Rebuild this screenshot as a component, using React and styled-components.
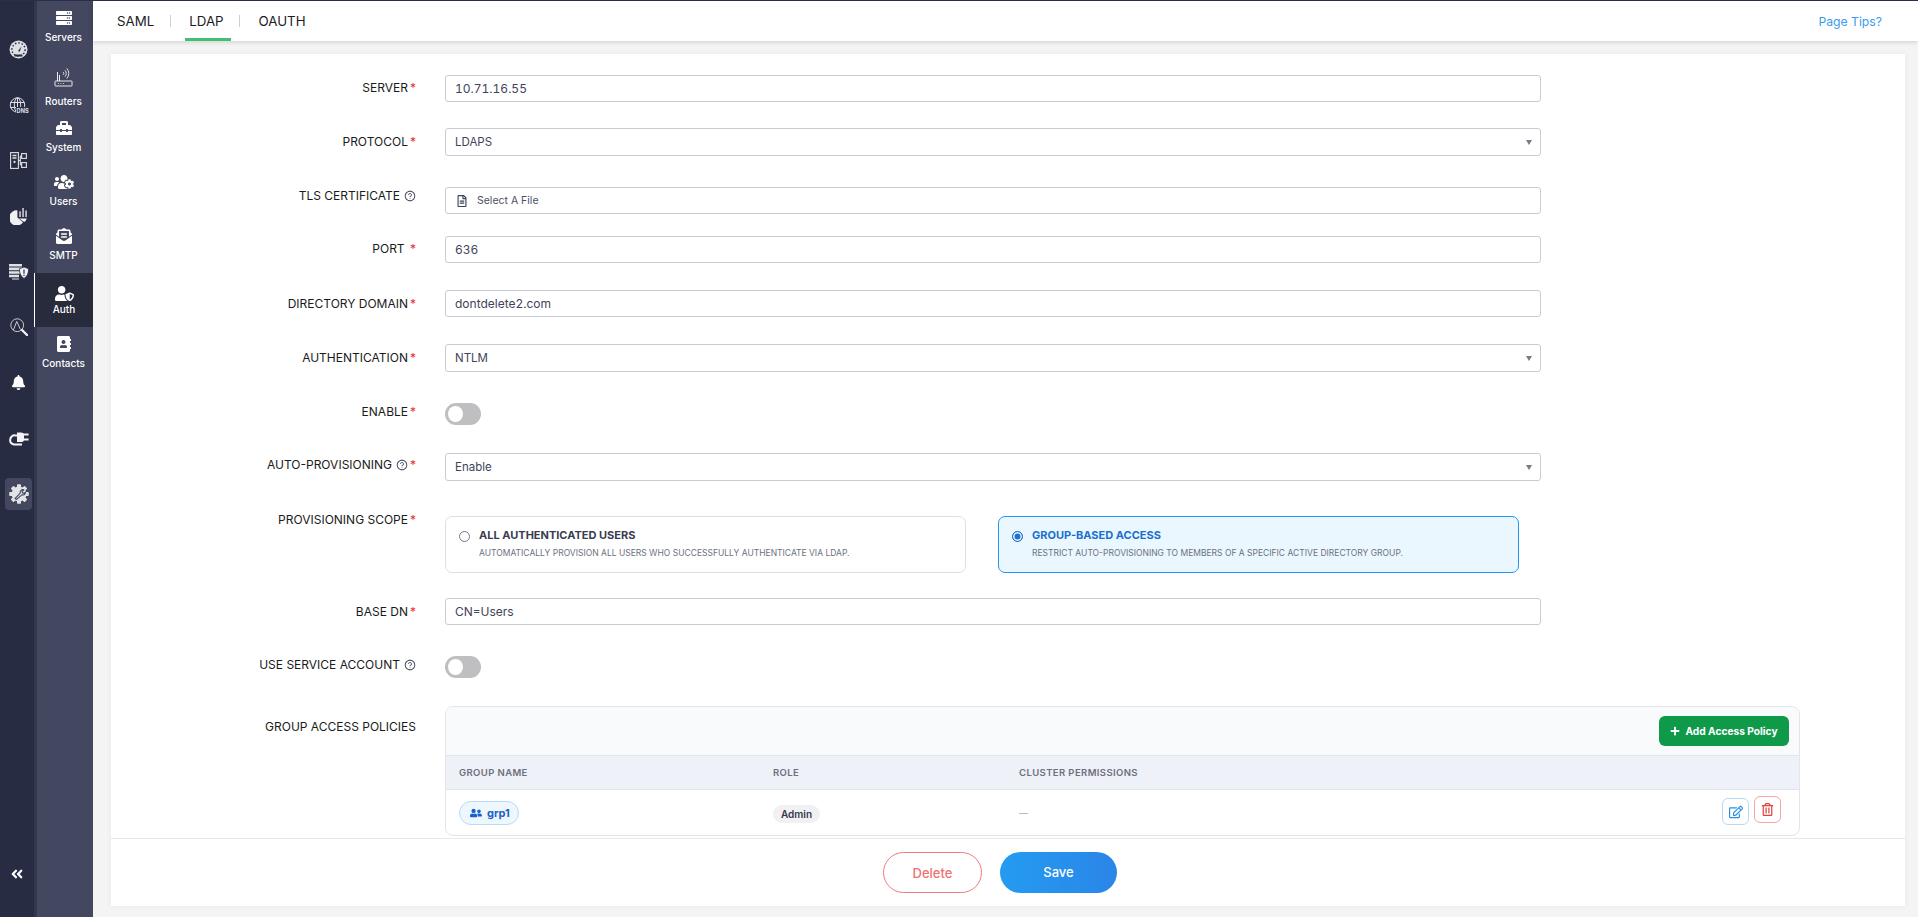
import React from 'react'
import styled, { createGlobalStyle } from 'styled-components'
import {
  FaServer, FaToolbox, FaUsersCog, FaEnvelopeOpenText, FaUserShield, FaAddressBook,
  FaBell, FaAngleDoubleLeft, FaRegFileAlt, FaUserFriends, FaRegEdit,
  FaRegTrashAlt, FaPlus,
} from 'react-icons/fa'
import { AiOutlineQuestionCircle } from 'react-icons/ai'

const GlobalStyle = createGlobalStyle`
  html, body { margin: 0; padding: 0; height: 100%; background: #f4f4f4; }
  * { box-sizing: border-box; }
  body { font-family: Inter, "Liberation Sans", sans-serif; overflow: hidden; }
`

/* hand drawn icons for what the packages don't have */
const RouterIcon = () => (
  <svg width="19" height="20" viewBox="0 0 19 20" fill="none" stroke="#e9e9ee" strokeWidth="1">
    <rect x="1" y="14" width="17" height="5" rx="0.5" />
    <path d="M3.5 14V5M5.5 14V8" />
    <path d="M11 5.5a2 2 0 0 1 0 3M13 3.5a5 5 0 0 1 0 7M15 1.5a8 8 0 0 1 0 11" transform="translate(-1 0) scale(.92)" />
    <path d="M4 16.5h.8M6.5 16.5h.8M9 16.5h.8" strokeWidth="1.2" />
  </svg>
)
const GaugeIcon = () => (
  <svg width="19" height="19" viewBox="0 0 19 19">
    <circle cx="9.5" cy="9.5" r="9" fill="#dfe0e4" />
    <circle cx="9.5" cy="9.5" r="6.6" fill="none" stroke="#282c43" strokeWidth="1.4" strokeDasharray="1.6 1.8" />
    <path d="M9 11l3.4-4.4 -1.6 5.2z" fill="#282c43" />
    <path d="M5.6 15.5h7.8" stroke="#282c43" strokeWidth="2" />
  </svg>
)
const DnsIcon = () => (
  <svg width="20" height="17" viewBox="0 0 20 17" fill="none" stroke="#dfe0e4" strokeWidth="1">
    <circle cx="8.5" cy="8" r="7.2" />
    <ellipse cx="8.5" cy="8" rx="3.2" ry="7.2" />
    <path d="M8.5 1v14M1.5 5.5h14M1.3 10.5h14" />
    <rect x="7" y="10" width="13" height="7" fill="#282c43" stroke="none" />
    <text x="7.6" y="16" fontSize="5.6" fontWeight="700" fill="#dfe0e4" stroke="none" fontFamily="Inter, sans-serif">DNS</text>
  </svg>
)
const NetworkIcon = () => (
  <svg width="17" height="17" viewBox="0 0 17 17" fill="none" stroke="#dfe0e4" strokeWidth="1.1">
    <rect x="0.6" y="0.6" width="7.8" height="15.8" />
    <path d="M2.5 3.5h4M2.5 6h4" strokeWidth="1.4" />
    <circle cx="4.5" cy="10" r="0.6" />
    <rect x="11.6" y="1.6" width="4.8" height="4.8" />
    <rect x="11.6" y="10.6" width="4.8" height="4.8" />
    <path d="M8.5 8.5h1.8M10.3 4v9M10.3 4h1.3M10.3 13h1.3" />
  </svg>
)
const PieBarsIcon = () => (
  <svg width="18" height="18" viewBox="0 0 18 18" fill="#f0f0f3">
    <path d="M7.4 3.4v7.2l5.6 4.6A7.6 7.6 0 1 1 7.4 3.4z" />
    <path d="M9 11.4h7.9a7.6 7.6 0 0 1-2.7 3.6z" />
    <path d="M9.4 4.2h1.3V10H9.4zM12.4 1h1.3v9h-1.3zM15.4 3.4h1.3V10h-1.3z" />
  </svg>
)
const ServerShieldIcon = () => (
  <svg width="20" height="16" viewBox="0 0 20 16">
    <path d="M0 0h13v2.6H0zM0 3.6h13v2.6H0zM0 7.2h11v2.6H0zM0 10.8h10v2.4H0zM3 14.6h7v1H3z" fill="#dfe0e4" />
    <path d="M15 3l4.6 1.8c0 4.4-1.4 8-4.6 9.6-3.2-1.6-4.6-5.2-4.6-9.6z" fill="#f2f2f4" stroke="#282c43" strokeWidth="0.8" />
    <path d="M15 5.5v4.2M15 10.8v1.2" stroke="#282c43" strokeWidth="1.2" />
  </svg>
)
const SearchChartIcon = () => (
  <svg width="18" height="18" viewBox="0 0 18 18" fill="none" stroke="#c9cad1" strokeWidth="1">
    <circle cx="7.2" cy="7.2" r="6.4" />
    <path d="M3.4 12l3.4-8.6 3.6 8" />
    <path d="M12 12l5 5" stroke="#f2f2f4" strokeWidth="2.4" strokeLinecap="round" />
  </svg>
)
const PlugIcon = () => (
  <svg width="20" height="15" viewBox="0 0 20 15" fill="none">
    <path d="M11 4.4H6.2A4.4 4.4 0 0 0 1.2 8.8a4 4 0 0 0 4 4.6H13" stroke="#f4f4f6" strokeWidth="2" />
    <path d="M8 1.4h4c2 0 3 1 3 2.6v4.4c0 1.6-1 2.6-3 2.6H8z" fill="#f4f4f6" />
    <path d="M14 2.6h5.6v2H14zM14 7.6h5.6v2H14z" fill="#f4f4f6" />
  </svg>
)
const GearWrenchIcon = () => (
  <svg width="20" height="20" viewBox="0 0 20 20">
    <g fill="#e2e3e7">
      <circle cx="10" cy="10" r="7.4" />
      {[0, 45, 90, 135, 180, 225, 270, 315].map((a) => (
        <rect key={a} x="8" y="0.2" width="4" height="4.6" rx="0.8" transform={`rotate(${a} 10 10)`} />
      ))}
    </g>
    <path d="M6 14.6l5.2-5.4a2.8 2.8 0 0 1 3.6-3.4l-1.8 1.9.9 1.4 1.7-.1 1-.9a2.8 2.8 0 0 1-3.8 2.7l-5.2 4.6z" fill="#e2e3e7" stroke="#43475f" strokeWidth="1.1" strokeLinejoin="round" />
  </svg>
)

const railItems = [
  { icon: <GaugeIcon /> },
  { icon: <DnsIcon /> },
  { icon: <NetworkIcon /> },
  { icon: <PieBarsIcon /> },
  { icon: <ServerShieldIcon /> },
  { icon: <SearchChartIcon /> },
  { icon: <FaBell size={15} color="#fff" /> },
  { icon: <PlugIcon /> },
  { icon: <GearWrenchIcon />, active: true },
]

const subItems = [
  { label: 'Servers', icon: <FaServer size={16} /> },
  { label: 'Routers', icon: <RouterIcon />, height: 64, top: 21, gap: 8 },
  { label: 'System', icon: <FaToolbox size={16} />, height: 54 },
  { label: 'Users', icon: <FaUsersCog size={20} />, height: 54 },
  { label: 'SMTP', icon: <FaEnvelopeOpenText size={16} />, height: 54 },
  { label: 'Auth', icon: <FaUserShield size={19} />, height: 54, top: 11, gap: 0, active: true },
  { label: 'Contacts', icon: <FaAddressBook size={16} />, height: 54 },
]

function Help() {
  return <HelpMark><AiOutlineQuestionCircle /></HelpMark>
}

function SelectField({ value }) {
  return (
    <SelectBox>
      <span>{value}</span>
      <Caret />
    </SelectBox>
  )
}

function Field({ label, required, spaced, help, after, shift, wide, children }) {
  return (
    <FieldRow $after={after}>
      <FieldLabel $shift={shift}>
        {label}
        {spaced && '\u00a0'}
        {help && <Help />}
        {required && <Star>*</Star>}
      </FieldLabel>
      <FieldControl $wide={wide}>{children}</FieldControl>
    </FieldRow>
  )
}

export default function App() {
  return (
    <Page>
      <GlobalStyle />
      <Rail>
        {railItems.map((item, i) => (
          <RailItem key={i}>
            <RailIcon $active={item.active}>{item.icon}</RailIcon>
          </RailItem>
        ))}
        <Collapse><FaAngleDoubleLeft size={14} /></Collapse>
      </Rail>
      <SubNav>
        {subItems.map((item) => (
          <SubNavItem key={item.label} $height={item.height} $top={item.top} $gap={item.gap} $active={item.active}>
            <SubNavIcon>{item.icon}</SubNavIcon>
            <SubNavLabel>{item.label}</SubNavLabel>
          </SubNavItem>
        ))}
      </SubNav>
      <Main>
        <TopBar>
          <Tabs>
            <Tab>SAML</Tab>
            <TabDivider $left={16} $right={14} />
            <Tab $active>LDAP</Tab>
            <TabDivider $left={8} $right={19} />
            <Tab>OAUTH</Tab>
          </Tabs>
          <PageTips>Page Tips?</PageTips>
        </TopBar>
        <Content>
          <Card>
            <Form>
              <Field label="SERVER" required after={26} shift={-1}>
                <TextInput readOnly value="10.71.16.55" />
              </Field>
              <Field label="PROTOCOL" required after={31}>
                <SelectField value="LDAPS" />
              </Field>
              <Field label="TLS CERTIFICATE" help after={22} shift={-5}>
                <FileBox>
                  <FaRegFileAlt size={12} color="#3f4359" />
                  <span>Select A File</span>
                </FileBox>
              </Field>
              <Field label="PORT" spaced required after={27} shift={-1}>
                <TextInput readOnly value="636" />
              </Field>
              <Field label="DIRECTORY DOMAIN" required after={27}>
                <TextInput readOnly value="dontdelete2.com" />
              </Field>
              <Field label="AUTHENTICATION" required after={31}>
                <SelectField value="NTLM" />
              </Field>
              <Field label="ENABLE" required after={28} shift={-5}>
                <Toggle />
              </Field>
              <Field label="AUTO-PROVISIONING" help required after={35} shift={-2}>
                <SelectField value="Enable" />
              </Field>
              <Field label="PROVISIONING SCOPE" required after={25} shift={-10} wide>
                <ScopeRow>
                  <ScopeCard>
                    <Radio />
                    <ScopeText>
                      <ScopeTitle>ALL AUTHENTICATED USERS</ScopeTitle>
                      <ScopeDesc>AUTOMATICALLY PROVISION ALL USERS WHO SUCCESSFULLY AUTHENTICATE VIA LDAP.</ScopeDesc>
                    </ScopeText>
                  </ScopeCard>
                  <ScopeCard $selected>
                    <Radio $selected />
                    <ScopeText>
                      <ScopeTitle $selected>GROUP-BASED ACCESS</ScopeTitle>
                      <ScopeDesc>RESTRICT AUTO-PROVISIONING TO MEMBERS OF A SPECIFIC ACTIVE DIRECTORY GROUP.</ScopeDesc>
                    </ScopeText>
                  </ScopeCard>
                </ScopeRow>
              </Field>
              <Field label="BASE DN" required after={31}>
                <TextInput readOnly value="CN=Users" />
              </Field>
              <Field label="USE SERVICE ACCOUNT" help after={28} shift={-5}>
                <Toggle />
              </Field>
              <Field label="GROUP ACCESS POLICIES" shift={7} wide>
                <PolicyTable>
                  <PolicyToolbar>
                    <AddButton><FaPlus size={10} /> Add Access Policy</AddButton>
                  </PolicyToolbar>
                  <PolicyHead>
                    <span>GROUP NAME</span>
                    <span>ROLE</span>
                    <span>CLUSTER PERMISSIONS</span>
                  </PolicyHead>
                  <PolicyRow>
                    <div><GroupChip><FaUserFriends size={12} /> grp1</GroupChip></div>
                    <div><RoleChip>Admin</RoleChip></div>
                    <NoValue>—</NoValue>
                    <RowActions>
                      <IconButton $tone="blue"><FaRegEdit size={14} /></IconButton>
                      <IconButton $tone="red" $raised><FaRegTrashAlt size={13} /></IconButton>
                    </RowActions>
                  </PolicyRow>
                </PolicyTable>
              </Field>
            </Form>
            <Footer>
              <DeleteButton>Delete</DeleteButton>
              <SaveButton>Save</SaveButton>
            </Footer>
          </Card>
        </Content>
      </Main>
    </Page>
  )
}

const Page = styled.div`
  display: flex;
  height: 917px;
  width: 1918px;
  overflow: hidden;
  background: #f4f4f4;
  border-top: 1px solid #2a2e48;
`

const Rail = styled.nav`
  width: 34px;
  flex: none;
  display: flex;
  flex-direction: column;
  padding-top: 21px;
  background: #282c43;
`

const RailItem = styled.div`
  height: 55.5px;
  padding-left: 3px;
  display: flex;
  align-items: center;
  justify-content: center;
`

const RailIcon = styled.div`
  width: 27px;
  height: 32px;
  border-radius: 4px;
  display: flex;
  align-items: center;
  justify-content: center;
  background: ${(p) => (p.$active ? '#43475f' : 'transparent')};
`

const Collapse = styled.div`
  margin-top: auto;
  padding-bottom: 36px;
  display: flex;
  justify-content: center;
  color: #fff;
`

const SubNav = styled.nav`
  width: 59px;
  flex: none;
  background: linear-gradient(90deg, #34384f 3px, #43475f 3px);
  color: #fff;
`

const SubNavItem = styled.div`
  height: ${(p) => p.$height || 46}px;
  padding-top: ${(p) => p.$top ?? 8}px;
  display: flex;
  flex-direction: column;
  align-items: center;
  gap: ${(p) => p.$gap ?? 3}px;
  background: ${(p) => (p.$active ? '#272b3b' : 'transparent')};
  border-left: ${(p) => (p.$active ? '1px solid #fff' : 'none')};
`

const SubNavIcon = styled.div`
  height: 18px;
  display: flex;
  align-items: center;
  justify-content: center;
`

const SubNavLabel = styled.div`
  font-size: 10px;
  font-weight: 500;
  line-height: 14px;
`

const Main = styled.div`
  flex: 1;
  min-width: 0;
  display: flex;
  flex-direction: column;
`

const TopBar = styled.header`
  height: 40px;
  flex: none;
  display: flex;
  align-items: stretch;
  justify-content: space-between;
  background: #fff;
  box-shadow: 0 1px 5px rgba(0, 0, 0, 0.16);
  position: relative;
`

const Tabs = styled.div`
  display: flex;
  align-items: center;
  padding-left: 24px;
`

const Tab = styled.div`
  height: 40px;
  padding: 3px ${(p) => (p.$active ? '7px' : '0')} 0 ${(p) => (p.$active ? '4px' : '0')};
  display: flex;
  align-items: center;
  font-size: 13.3px;
  color: #1d1d1f;
  border-bottom: 3px solid ${(p) => (p.$active ? '#3fbf74' : 'transparent')};
`

const TabDivider = styled.div`
  width: 1px;
  height: 12px;
  margin: 0 ${(p) => p.$right}px 0 ${(p) => p.$left}px;
  background: #cfcfcf;
`

const PageTips = styled.a`
  align-self: center;
  padding-right: 36px;
  font-size: 12.2px;
  color: #3a9bef;
`

const Content = styled.main`
  flex: 1;
  min-height: 0;
  padding: 13px 13px 11px 18px;
`

const Card = styled.section`
  height: 100%;
  display: flex;
  flex-direction: column;
  background: #fff;
  box-shadow: 0 0 6px rgba(0, 0, 0, 0.05);
`

const Form = styled.div`
  flex: 1;
  min-height: 0;
  overflow: hidden;
  padding-top: 21px;
`

const FieldRow = styled.div`
  display: grid;
  grid-template-columns: 305px 1fr;
  column-gap: 29px;
  margin-bottom: ${(p) => p.$after || 0}px;
`

const FieldLabel = styled.label`
  display: flex;
  align-items: center;
  justify-content: flex-end;
  height: 27px;
  margin-top: ${(p) => p.$shift || 0}px;
  font-size: 12px;
  font-weight: 400;
  color: #1a1b20;
  white-space: nowrap;
`

const Star = styled.span`
  color: #ee2b2b;
  margin-left: 2px;
`

const HelpMark = styled.span`
  display: inline-flex;
  margin-left: 4px;
  font-size: 12px;
  color: #3f4359;
`

const FieldControl = styled.div`
  width: ${(p) => (p.$wide ? '1355px' : '1096px')};
  min-width: 0;
`

const TextInput = styled.input`
  display: block;
  width: 100%;
  height: 27px;
  padding: 0 9px;
  border: 1px solid #c9ccd4;
  border-radius: 3px;
  outline: none;
  font: 400 12px Inter, sans-serif;
  font-variant-numeric: tabular-nums;
  color: #3f4359;
  background: #fff;
`

const SelectBox = styled.div`
  height: 28px;
  padding: 0 8px 0 9px;
  display: flex;
  align-items: center;
  justify-content: space-between;
  border: 1px solid #c9ccd4;
  border-radius: 3px;
  font-size: 11.5px;
  color: #3f4359;
`

const Caret = styled.span`
  width: 0;
  height: 0;
  border-left: 3px solid transparent;
  border-right: 3px solid transparent;
  border-top: 5px solid #777b88;
`

const FileBox = styled.div`
  height: 27px;
  padding: 0 10px;
  display: flex;
  align-items: center;
  gap: 9px;
  border: 1px solid #c9ccd4;
  border-radius: 3px;
  font-size: 10.5px;
  color: #4c5064;
`

const Toggle = styled.div`
  width: 36px;
  height: 22px;
  padding: 3px;
  border-radius: 11px;
  background: #bfbfc1;
  &::before {
    content: '';
    display: block;
    width: 15px;
    height: 16px;
    border-radius: 50%;
    background: #fff;
  }
`

const ScopeRow = styled.div`
  display: flex;
  gap: 32px;
  width: 1074px;
`

const ScopeCard = styled.div`
  flex: 1;
  height: 57px;
  display: flex;
  align-items: flex-start;
  gap: 9px;
  padding: 12px 13px 0;
  border: 1px solid ${(p) => (p.$selected ? '#2196f3' : '#dedfe3')};
  border-radius: 7px;
  background: ${(p) => (p.$selected ? '#ebf7fe' : '#fff')};
`

const Radio = styled.span`
  flex: none;
  width: 11px;
  height: 11px;
  margin-top: 2px;
  border-radius: 50%;
  border: 1px solid ${(p) => (p.$selected ? '#1f6fd2' : '#777b88')};
  background: ${(p) => (p.$selected ? '#1f6fd2' : '#fff')};
  box-shadow: ${(p) => (p.$selected ? 'inset 0 0 0 1.5px #ebf7fe' : 'none')};
`

const ScopeText = styled.div`
  min-width: 0;
`

const ScopeTitle = styled.div`
  font-size: 11px;
  font-weight: 700;
  line-height: 13px;
  color: ${(p) => (p.$selected ? '#1a6fd0' : '#3a3d4e')};
`

const ScopeDesc = styled.div`
  margin-top: 6px;
  font-size: 8.5px;
  line-height: 11px;
  color: #6c7080;
  white-space: nowrap;
`

const PolicyTable = styled.div`
  height: 130px;
  overflow: hidden;
  border: 1px solid #e3e5ea;
  border-radius: 8px;
`

const PolicyToolbar = styled.div`
  height: 49px;
  padding: 9px 10px 0 0;
  display: flex;
  justify-content: flex-end;
  background: #f9fafc;
  border-bottom: 1px solid #e3e5ea;
`

const AddButton = styled.button`
  width: 130px;
  height: 30px;
  display: flex;
  align-items: center;
  justify-content: center;
  gap: 5px;
  border: none;
  border-radius: 6px;
  background: #0f9a4a;
  color: #fff;
  font: 700 10.2px Inter, sans-serif;
`

const policyColumns = '314px 246px 1fr'

const PolicyHead = styled.div`
  height: 34px;
  padding-left: 13px;
  display: grid;
  grid-template-columns: ${policyColumns};
  align-items: center;
  background: #eef1f7;
  border-bottom: 1px solid #e3e5ea;
  font-size: 9.5px;
  font-weight: 600;
  letter-spacing: 0.4px;
  color: #6c7080;
`

const PolicyRow = styled.div`
  position: relative;
  height: 45px;
  padding-left: 13px;
  display: grid;
  grid-template-columns: ${policyColumns};
  align-items: center;
`

const GroupChip = styled.span`
  display: inline-flex;
  align-items: center;
  gap: 5px;
  height: 24px;
  padding: 0 8px 0 10px;
  border: 1px solid #b9d9f8;
  border-radius: 12px;
  background: #eef6fe;
  font-size: 11px;
  font-weight: 700;
  color: #1a62c6;
`

const RoleChip = styled.span`
  display: inline-flex;
  align-items: center;
  height: 18px;
  padding: 0 8px;
  border-radius: 9px;
  background: #f1f1f3;
  font-size: 10px;
  font-weight: 600;
  color: #33364a;
`

const NoValue = styled.span`
  font-size: 9px;
  color: #a9abb3;
`

const RowActions = styled.div`
  position: absolute;
  right: 18px;
  top: 8px;
  display: flex;
  gap: 5px;
`

const IconButton = styled.button`
  width: 27px;
  height: 27px;
  padding: 0;
  display: flex;
  align-items: center;
  justify-content: center;
  border-radius: 6px;
  background: #fff;
  border: 1px solid ${(p) => (p.$tone === 'blue' ? '#b5daf8' : '#f4a6a6')};
  color: ${(p) => (p.$tone === 'blue' ? '#2a8fe6' : '#e2403f')};
  margin-top: ${(p) => (p.$raised ? '-2px' : '0')};
`

const Footer = styled.footer`
  height: 68px;
  flex: none;
  padding: 13px 16px 0 0;
  display: flex;
  justify-content: center;
  gap: 18px;
  border-top: 1px solid #e8e8ea;
`

const DeleteButton = styled.button`
  width: 99px;
  height: 41px;
  border: 1px solid #f27b7b;
  border-radius: 21px;
  background: #fff;
  color: #f0716f;
  font: 500 13px Inter, sans-serif;
`

const SaveButton = styled.button`
  width: 117px;
  height: 41px;
  padding-bottom: 3px;
  border: none;
  border-radius: 21px;
  background: linear-gradient(90deg, #239cf0, #2b85e8);
  color: #fff;
  font: 500 13px Inter, sans-serif;
`
